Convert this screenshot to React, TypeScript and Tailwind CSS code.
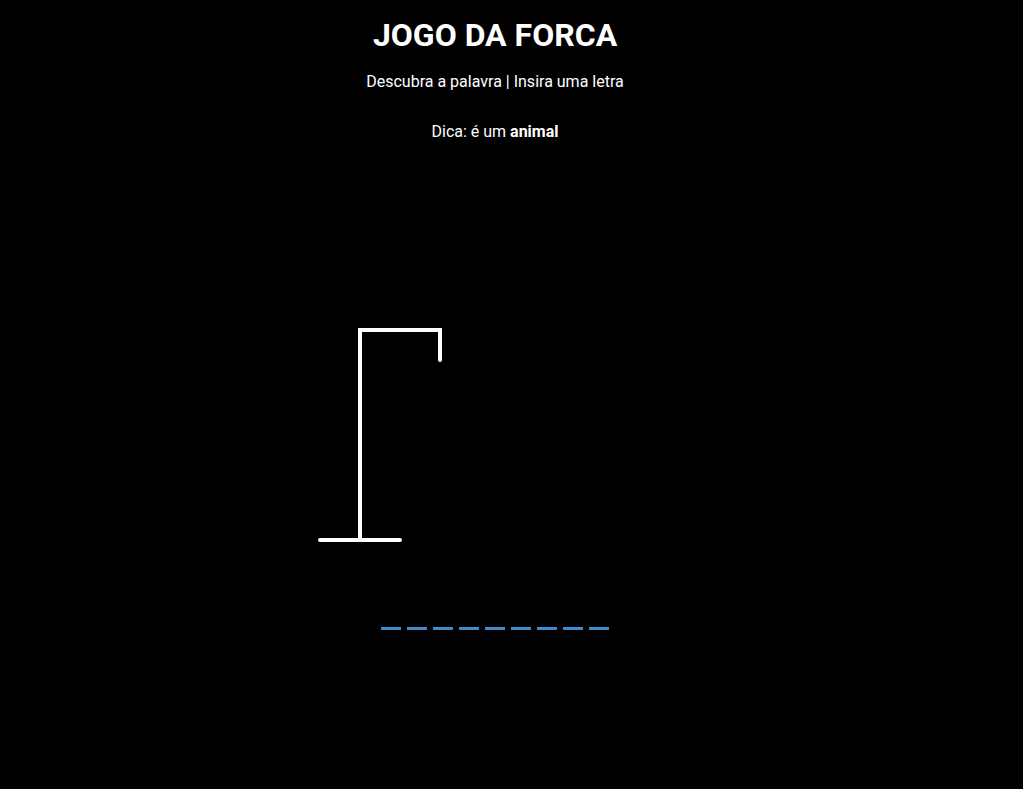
import React from "react"

const word = "ELEFANTES"

export default function App() {
  return (
    <div className="min-h-[789px] w-full bg-black text-white" style={{ fontFamily: "Roboto, 'Liberation Sans', sans-serif" }}>
      <div className="flex w-[990px] flex-col items-center pt-4">
        <h1 className="text-[32px] font-bold leading-[38px]">JOGO DA FORCA</h1>
        <p className="mt-[18px] text-base leading-[19px]">Descubra a palavra | Insira uma letra</p>
        <p className="mt-[31px] text-base leading-[19px]">
          Dica: é um <strong className="font-bold">animal</strong>
        </p>
        <svg width="400" height="420" viewBox="0 0 400 420" className="mt-[9px] block">
          <line x1="25" y1="390" x2="105" y2="390" stroke="white" strokeWidth="4" strokeLinecap="round" />
          <polyline
            points="65,390 65,180 145,180 145,210"
            fill="none"
            stroke="white"
            strokeWidth="4"
            strokeLinejoin="miter"
            strokeLinecap="round"
          />
        </svg>
        <div className="mt-[57px] flex gap-[6px]">
          {word.split("").map((_, i) => (
            <span key={i} className="block h-[3px] w-[20px] bg-[#428bca]" />
          ))}
        </div>
      </div>
    </div>
  )
}
